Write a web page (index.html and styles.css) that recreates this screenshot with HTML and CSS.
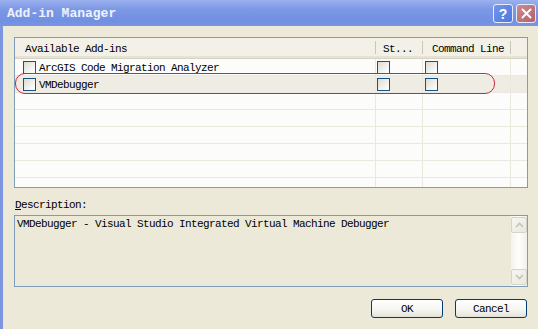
FILE: index.html
```html
<!DOCTYPE html>
<html lang="en">
<head>
  <meta charset="UTF-8">
  <title>Add-in Manager</title>
  <link rel="stylesheet" href="styles.css">
</head>
<body>
  <div class="window">
    <div class="titlebar">
      <span class="title">Add-in Manager</span>
      <div class="caption-buttons">
        <span class="cap-btn help">?</span>
        <span class="cap-btn close">
          <svg width="11" height="11" viewBox="0 0 11 11"><path d="M1.5 1.5 L9.5 9.5 M9.5 1.5 L1.5 9.5" stroke="#fff" stroke-width="2" stroke-linecap="round"/></svg>
        </span>
      </div>
    </div>

    <div class="content">
      <div class="list">
        <div class="list-row list-header">
          <div class="hcell name">Available Add-ins</div>
          <div class="hcell st">St...</div>
          <div class="hcell cmd">Command Line</div>
          <div class="hcell"></div>
        </div>
        <div class="list-row">
          <div class="cell name"><span class="check"></span>ArcGIS Code Migration Analyzer</div>
          <div class="cell st"><span class="check"></span></div>
          <div class="cell cmd"><span class="check"></span></div>
          <div class="cell"></div>
        </div>
        <div class="list-row selected">
          <div class="cell name"><span class="check"></span>VMDebugger</div>
          <div class="cell st"><span class="check"></span></div>
          <div class="cell cmd"><span class="check"></span></div>
          <div class="cell"></div>
        </div>
        <div class="list-row"><div class="cell"></div><div class="cell"></div><div class="cell"></div><div class="cell"></div></div>
        <div class="list-row"><div class="cell"></div><div class="cell"></div><div class="cell"></div><div class="cell"></div></div>
        <div class="list-row"><div class="cell"></div><div class="cell"></div><div class="cell"></div><div class="cell"></div></div>
        <div class="list-row"><div class="cell"></div><div class="cell"></div><div class="cell"></div><div class="cell"></div></div>
        <div class="list-row"><div class="cell"></div><div class="cell"></div><div class="cell"></div><div class="cell"></div></div>
        <div class="list-row"><div class="cell"></div><div class="cell"></div><div class="cell"></div><div class="cell"></div></div>

        <div class="highlight-ring"></div>
      </div>

      <div class="desc-label"><u>D</u>escription:</div>
      <div class="desc-box">
        <div class="desc-text">VMDebugger - Visual Studio Integrated Virtual Machine Debugger</div>
        <div class="scrollbar">
          <span class="arrow">
            <svg width="9" height="6" viewBox="0 0 9 6"><path d="M1 5 L4.5 1.5 L8 5" fill="none" stroke="#c6c4b6" stroke-width="1.6"/></svg>
          </span>
          <span class="arrow">
            <svg width="9" height="6" viewBox="0 0 9 6"><path d="M1 1 L4.5 4.5 L8 1" fill="none" stroke="#c6c4b6" stroke-width="1.6"/></svg>
          </span>
        </div>
      </div>

      <div class="actions">
        <button class="button">OK</button>
        <button class="button">Cancel</button>
      </div>
    </div>
  </div>
</body>
</html>
```

FILE: styles.css
```css
* {
  box-sizing: border-box;
}
body {
  margin: 0;
  font-family: "Liberation Mono", monospace;
  font-size: 11px;
  letter-spacing: -0.6px;
  color: #000;
  background-color: #ece9d8;
}
.window {
  width: 538px;
  height: 329px;
  display: flex;
  flex-direction: column;
  overflow: hidden;
}
.titlebar {
  height: 26px;
  flex: none;
  display: flex;
  align-items: center;
  justify-content: space-between;
  padding: 0 2px 0 7px;
  background: linear-gradient(#9bb1ee, #7d98e5 35%, #7190e2 80%, #7a94e0);
}
.title {
  font-size: 13px;
  font-weight: bold;
  letter-spacing: 0;
  color: #eef2fd;
}
.caption-buttons {
  display: flex;
  gap: 3px;
  margin-top: 1px;
}
.cap-btn {
  width: 20px;
  height: 19px;
  display: flex;
  align-items: center;
  justify-content: center;
  border: 1px solid #e6ecfb;
  border-radius: 3px;
  color: #fff;
}
.help {
  background: linear-gradient(135deg, #7396ec, #4c78e0);
  font-family: "Liberation Sans", sans-serif;
  font-weight: bold;
  font-size: 14px;
  letter-spacing: 0;
}
.close {
  background: linear-gradient(135deg, #cf8a8e, #b35f6a);
}
.content {
  flex: 1;
  display: flex;
  flex-direction: column;
  border-left: 3px solid #7b95de;
  padding: 11px 10px 0 11px;
}
.list {
  position: relative;
  height: 151px;
  flex: none;
  border: 1px solid #7f9db9;
  background-color: #fcfcfa;
  overflow: hidden;
}
.list-row {
  display: grid;
  grid-template-columns: 361px 47px 88px 1fr;
  height: 17px;
}
.cell {
  display: flex;
  align-items: center;
  white-space: nowrap;
  padding-top: 1px;
  border-right: 1px solid #ebe9df;
  border-bottom: 1px solid #ebe9df;
}
.cell:last-child {
  border-right: none;
}
.cell.name {
  padding-left: 8px;
}
.cell.st {
  padding-left: 1px;
}
.cell.cmd {
  padding-left: 2px;
}
.list-header {
  height: 21px;
  background-color: #f3f1e7;
  border-bottom: 1px solid #d7d3c4;
  box-shadow: inset 0 -2px 0 #e6e3d6;
}
.hcell {
  display: flex;
  align-items: center;
  white-space: nowrap;
  padding-top: 2px;
  background: linear-gradient(#c9c6b6, #c9c6b6) right 3px / 1px 13px no-repeat;
}
.hcell.name {
  padding-left: 10px;
}
.hcell.st {
  padding-left: 7px;
}
.hcell.cmd {
  padding-left: 9px;
}
.hcell:last-child {
  background: none;
}
.selected {
  background-color: #efede3;
}
.check {
  width: 13px;
  height: 13px;
  flex: none;
  margin-right: 3px;
  border: 1px solid #1c5180;
  background: linear-gradient(135deg, #dcdcd4, #f6f6f3 70%, #fff);
}
.highlight-ring {
  position: absolute;
  left: 0;
  top: 35px;
  width: 480px;
  height: 21px;
  border: 1px solid #c8283c;
  border-radius: 10px;
}
.desc-label {
  margin-top: 11px;
  line-height: 13px;
  padding-left: 1px;
}
.desc-box {
  margin-top: 3px;
  height: 72px;
  flex: none;
  display: flex;
  border: 1px solid #7f9db9;
  background-color: #ece9d8;
}
.desc-text {
  flex: 1;
  padding: 2px 2px;
  line-height: 12px;
  white-space: nowrap;
}
.scrollbar {
  width: 16px;
  display: flex;
  flex-direction: column;
  justify-content: space-between;
  padding: 1px 0;
  background: linear-gradient(90deg, #f4f3ee, #fefefd 50%, #f1f0ea);
}
.arrow {
  height: 16px;
  display: flex;
  align-items: center;
  justify-content: center;
  border: 1px solid #d6d4c8;
  border-radius: 2px;
  background: linear-gradient(135deg, #f6f5f0, #e9e8e0);
}
.actions {
  margin-top: 12px;
  display: flex;
  justify-content: flex-end;
  gap: 12px;
  padding-right: 1px;
}
.button {
  width: 72px;
  height: 19px;
  padding: 0;
  font-family: "Liberation Mono", monospace;
  font-size: 11px;
  letter-spacing: -0.6px;
  color: #000;
  border: 1px solid #003c74;
  border-radius: 3px;
  background: linear-gradient(#ffffff, #f4f4f0 60%, #e3e1d8);
}
```
